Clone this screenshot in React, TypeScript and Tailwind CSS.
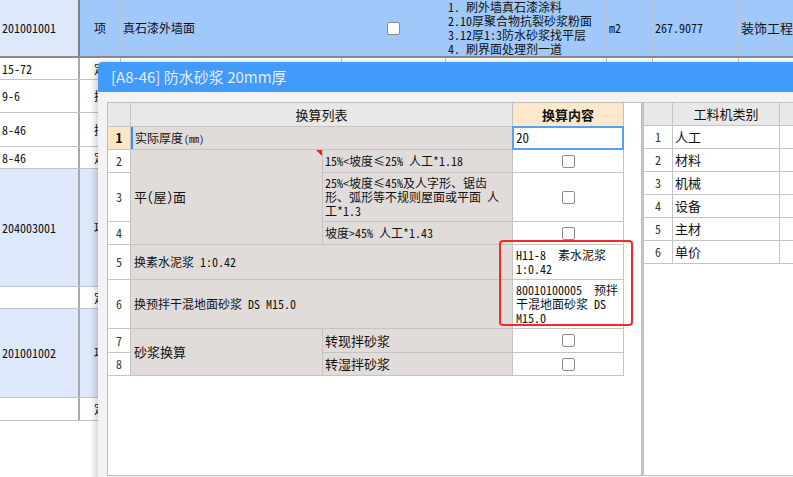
import React from 'react';

// background sheet rows (under the dialog)
const sheetRows = [
  { h: 'h-[22px]', code: '15-72', type: '定', blue: false },
  { h: 'h-[33px]', code: '9-6', type: '换', blue: false },
  { h: 'h-[34px]', code: '8-46', type: '换', blue: false },
  { h: 'h-[22px]', code: '8-46', type: '定', blue: false },
  { h: 'h-[118px]', code: '204003001', type: '项', blue: true },
  { h: 'h-[22px]', code: '', type: '定', blue: false },
  { h: 'h-[89px]', code: '201001002', type: '项', blue: true },
  { h: 'h-[23px]', code: '', type: '定', blue: false },
];

const restCols = ['w-[221px]', 'w-[104px]', 'w-[161px]', 'w-[46px]', 'w-[86px]', 'w-[80px]'];

function Check() {
  return <span className="block w-[13px] h-[13px] rounded-[2px] border border-[#8c8c8c] bg-white" />;
}

function Sheet() {
  return (
    <div className="flex flex-col">
      <div className="flex h-[58px] border-b-2 border-[#8a8a8a] bg-[#a0c8fb]">
        <div className="w-[80px] shrink-0 border-r-2 border-[#7f7f7f] bg-[#dde9fb] flex items-center pl-[2px]">
          201001001
        </div>
        <div className="w-[41px] shrink-0 border-r border-[#b9c6d6] flex items-center justify-center">项</div>
        <div className="w-[221px] shrink-0 border-r border-[#b9c6d6] flex items-center pl-[2px]">真石漆外墙面</div>
        <div className="w-[104px] shrink-0 border-r border-[#b9c6d6] flex items-center justify-center">
          <Check />
        </div>
        <div className="w-[161px] shrink-0 border-r border-[#b9c6d6] flex flex-col justify-center pl-[2px] leading-[14px] whitespace-nowrap">
          <span>1. 刷外墙真石漆涂料</span>
          <span>2.10厚聚合物抗裂砂浆粉面</span>
          <span>3.12厚1:3防水砂浆找平层</span>
          <span>4. 刷界面处理剂一道</span>
        </div>
        <div className="w-[46px] shrink-0 border-r border-[#b9c6d6] flex items-center pl-[2px]">m2</div>
        <div className="w-[86px] shrink-0 border-r border-[#b9c6d6] flex items-center pl-[2px]">267.9077</div>
        <div className="w-[80px] shrink-0 flex items-center pl-[2px] text-[13px]">装饰工程</div>
      </div>
      {sheetRows.map((r, i) => (
        <div key={i} className={`flex shrink-0 ${r.h} border-b border-[#c4c4c4] ${r.blue ? 'bg-[#dde9fb]' : 'bg-white'}`}>
          <div className="w-[80px] shrink-0 border-r-2 border-[#a8a8a8] flex items-center pl-[2px]">{r.code}</div>
          <div className="w-[41px] shrink-0 border-r border-[#c4c4c4] flex items-center justify-center">{r.type}</div>
          {restCols.map((w, j) => (
            <div key={j} className={`${w} shrink-0 border-r border-[#c4c4c4]`} />
          ))}
        </div>
      ))}
    </div>
  );
}

const cell = 'flex items-center';
const grey = 'bg-[#e1dcd9]';

function ConvertTable() {
  return (
    <div className="grid w-fit grid-cols-[22px_191px_189px_110px] grid-rows-[23px_22px_22px_48px_22px_34px_48px_23px_22px] gap-px bg-[#c4c4c4] border-r border-b border-[#c4c4c4]">
      {/* header */}
      <div className="col-start-1 row-start-1 bg-[#e8e8e8]" />
      <div className={`col-start-2 col-span-2 row-start-1 bg-[#e8e8e8] ${cell} justify-center text-[13px]`}>换算列表</div>
      <div className={`col-start-4 row-start-1 bg-[#fde8cb] ${cell} justify-center text-[13px] font-bold`}>换算内容</div>

      {/* row numbers */}
      <div className={`col-start-1 row-start-2 bg-[#fde5c6] ${cell} justify-center font-bold text-[13px]`}>1</div>
      {['2', '3', '4', '5', '6', '7', '8'].map((n, i) => (
        <div key={n} className={`col-start-1 bg-white ${cell} justify-center text-[#333]`} style={{ gridRowStart: i + 3 }}>
          {n}
        </div>
      ))}

      {/* row 1 */}
      <div className={`col-start-2 col-span-2 row-start-2 ${grey} ${cell} relative pl-[4px]`}>
        <span className="absolute left-0 top-0 bottom-0 w-[2px] bg-[#3d8ef0]" />
        实际厚度<span className="text-[10px] ml-px">(mm)</span>
      </div>
      <div className={`col-start-4 row-start-2 bg-white border-2 border-[#55a0f5] -m-px ${cell} pl-[2px] text-[13px]`}>20</div>

      {/* 平(屋)面 */}
      <div className={`col-start-2 row-start-3 row-span-3 ${grey} ${cell} relative pl-[3px] text-[13px]`}>
        平(屋)面
        <span className="absolute right-0 top-0 w-[6px] h-[6px] bg-[#f21c1c] [clip-path:polygon(0_0,100%_0,100%_100%)]" />
      </div>
      <div className={`col-start-3 row-start-3 ${grey} ${cell} pl-[2px] whitespace-nowrap`}>15%&lt;坡度≤25% 人工*1.18</div>
      <div className={`col-start-3 row-start-4 ${grey} flex flex-col justify-center pl-[2px] leading-[14px] whitespace-nowrap`}>
        <span>25%&lt;坡度≤45%及人字形、锯齿</span>
        <span>形、弧形等不规则屋面或平面 人</span>
        <span>工*1.3</span>
      </div>
      <div className={`col-start-3 row-start-5 ${grey} ${cell} pl-[2px] whitespace-nowrap`}>坡度&gt;45% 人工*1.43</div>
      {[3, 4, 5].map((r) => (
        <div key={r} className={`col-start-4 bg-white ${cell} justify-center`} style={{ gridRowStart: r }}>
          <Check />
        </div>
      ))}

      {/* replacement rows */}
      <div className={`col-start-2 col-span-2 row-start-6 ${grey} ${cell} pl-[3px] whitespace-nowrap`}>换素水泥浆 1:0.42</div>
      <div className="col-start-4 row-start-6 bg-white flex flex-col justify-center pl-[3px] leading-[14px] whitespace-nowrap">
        <span>H11-8&nbsp; 素水泥浆</span>
        <span>1:0.42</span>
      </div>
      <div className={`col-start-2 col-span-2 row-start-7 ${grey} ${cell} pl-[3px] whitespace-nowrap`}>换预拌干混地面砂浆 DS M15.0</div>
      <div className="col-start-4 row-start-7 bg-white flex flex-col justify-center pl-[3px] leading-[14px] whitespace-nowrap">
        <span>80010100005&nbsp; 预拌</span>
        <span>干混地面砂浆 DS</span>
        <span>M15.0</span>
      </div>

      {/* 砂浆换算 */}
      <div className={`col-start-2 row-start-8 row-span-2 ${grey} ${cell} pl-[3px] text-[13px]`}>砂浆换算</div>
      <div className={`col-start-3 row-start-8 ${grey} ${cell} pl-[2px] text-[13px]`}>转现拌砂浆</div>
      <div className={`col-start-3 row-start-9 ${grey} ${cell} pl-[2px] text-[13px]`}>转湿拌砂浆</div>
      {[8, 9].map((r) => (
        <div key={r} className={`col-start-4 bg-white ${cell} justify-center`} style={{ gridRowStart: r }}>
          <Check />
        </div>
      ))}
    </div>
  );
}

const kinds = ['人工', '材料', '机械', '设备', '主材', '单价'];

function KindTable() {
  return (
    <div className="grid w-fit grid-cols-[28px_106px_60px] auto-rows-[22px] gap-px bg-[#c4c4c4] border-b border-[#c4c4c4]">
      <div className="bg-[#e8e8e8]" />
      <div className={`bg-[#e8e8e8] ${cell} justify-center text-[13px]`}>工料机类别</div>
      <div className="bg-[#e8e8e8]" />
      {kinds.map((k, i) => (
        <React.Fragment key={k}>
          <div className={`bg-white ${cell} justify-center text-[#333]`}>{i + 1}</div>
          <div className={`bg-white ${cell} pl-[2px] text-[13px]`}>{k}</div>
          <div className="bg-white" />
        </React.Fragment>
      ))}
    </div>
  );
}

function Dialog() {
  return (
    <div className="absolute left-[98px] top-[62px] w-[720px] h-[430px] flex flex-col rounded-t-[5px] bg-[#f3f3f3] shadow-[-3px_0_6px_rgba(0,0,0,0.18)]">
      <div className="h-[30px] shrink-0 rounded-t-[5px] bg-[#409bfa] flex items-center pl-[13px] font-['Noto_Sans_CJK_SC',sans-serif] text-[15px] text-[#e2edfc]">
        [A8-46] 防水砂浆 20mm厚
      </div>
      <div className="flex pt-[10px] pl-[9px]">
        <div className="w-[535px] h-[374px] shrink-0 border border-[#bdbdbd] bg-white">
          <ConvertTable />
        </div>
        <div className="w-[200px] h-[374px] shrink-0 border-l-2 border-t border-b border-[#c4c4c4] bg-white">
          <KindTable />
        </div>
      </div>
    </div>
  );
}

export default function App() {
  return (
    <div className="relative w-[793px] h-[477px] overflow-hidden bg-white font-['Noto_Sans_Mono_CJK_SC','Noto_Sans_CJK_SC',sans-serif] text-[12px] text-[#111]">
      <Sheet />
      <Dialog />
      <div className="absolute left-[499px] top-[240px] w-[134px] h-[86px] rounded-[4px] border-2 border-[#f32a2a]" />
    </div>
  );
}
